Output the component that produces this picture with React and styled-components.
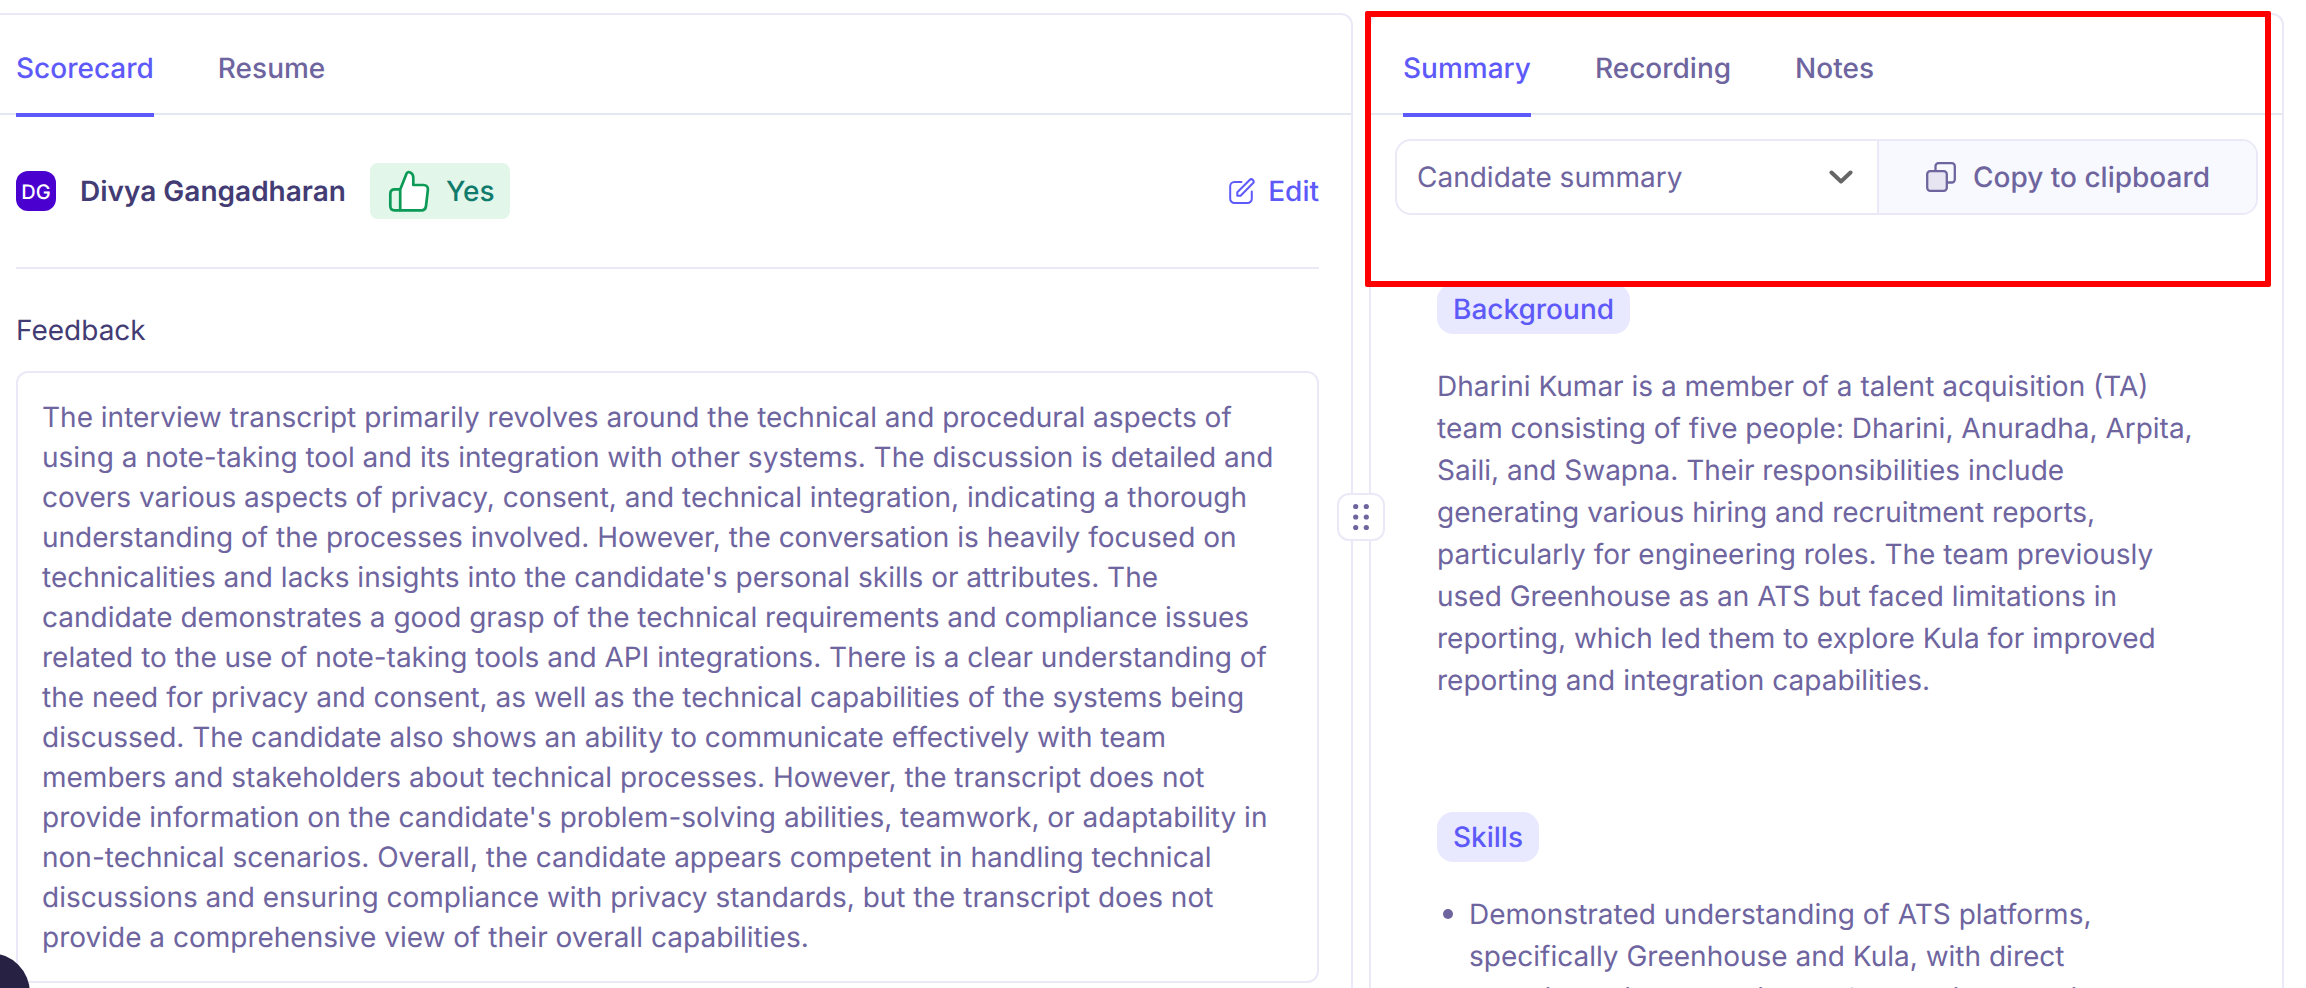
import React from "react";
import styled, { createGlobalStyle } from "styled-components";

const color = {
  primary: "#5e5af9",
  text: "#6e659f",
  heading: "#433c74",
  border: "#ebe9f7",
  rule: "#e2e8f0",
  tag: "#e8e8ff",
};

const GlobalStyle = createGlobalStyle`
  *, *::before, *::after { box-sizing: border-box; }
  body {
    margin: 0;
    background: #fff;
    color: ${color.text};
    font: 400 28px/42px Inter, "Liberation Sans", sans-serif;
    text-rendering: geometricPrecision;
    -webkit-font-smoothing: antialiased;
  }
  button, select { font: inherit; color: inherit; margin: 0; text-rendering: inherit; }
  h2, h3, p, ul { margin: 0; padding: 0; font: inherit; }
`;

const Page = styled.main`
  display: grid;
  grid-template-columns: minmax(0, 1353fr) minmax(0, 915fr);
  column-gap: 16px;
  height: 100vh;
  padding: 13px 22px 0 0;
  overflow: hidden;
`;

const Panel = styled.section`
  position: relative;
  border: 2px solid ${color.border};
  border-bottom: 0;
  border-radius: 0 12px 0 0;
  ${(p) => (p.$cutLeft ? "border-left: 0;" : "border-top-left-radius: 12px;")}
`;

const Tabs = styled.div`
  display: flex;
  gap: 64px;
  height: 100px;
  padding: 0 32px 0 ${(p) => p.$inset}px;
  border-bottom: 2px solid ${color.rule};
`;

const Tab = styled.button`
  height: 102px;
  padding: 8px 0 0;
  border: 0;
  border-bottom: 4px solid ${(p) => (p.$active ? color.primary : "transparent")};
  background: none;
  color: ${(p) => (p.$active ? color.primary : color.text)};
  font-weight: 500;
  cursor: pointer;
`;

const Scorecard = styled.div`
  padding: 0 32px 0 16px;
`;

const Reviewer = styled.header`
  display: flex;
  align-items: center;
  gap: 24px;
  padding: 48px 0;
  border-bottom: 2px solid ${color.border};
`;

const Avatar = styled.span`
  display: grid;
  place-items: center;
  width: 40px;
  height: 40px;
  border-radius: 12px;
  background: #4a00cf;
  color: #fff;
  font-size: 20px;
  font-weight: 500;
`;

const Name = styled.h2`
  color: ${color.heading};
  font-weight: 600;
`;

const Verdict = styled.span`
  display: flex;
  align-items: center;
  gap: 16px;
  height: 56px;
  padding: 0 16px;
  border-radius: 8px;
  background: #e3f6ea;
  color: #0f7b6c;
  font-weight: 500;
`;

const EditButton = styled.button`
  display: flex;
  align-items: center;
  gap: 12px;
  margin-left: auto;
  padding: 0;
  border: 0;
  background: none;
  color: ${color.primary};
  font-weight: 500;
  cursor: pointer;
`;

const FeedbackTitle = styled.h3`
  padding: 40px 0 20px;
  color: ${color.heading};
`;

const FeedbackBox = styled.p`
  padding: 24px;
  border: 2px solid ${color.border};
  border-radius: 12px;
  line-height: 40px;
`;

const Toolbar = styled.div`
  display: flex;
  height: 76px;
  margin: 24px 24px 0;
  border: 2px solid ${color.border};
  border-radius: 16px;
  overflow: hidden;
`;

const SelectWrap = styled.label`
  position: relative;
  flex: 1;
  display: flex;
  min-width: 0;
`;

const Select = styled.select`
  flex: 1;
  min-width: 0;
  padding: 0 64px 0 20px;
  border: 0;
  background: none;
  appearance: none;
  cursor: pointer;
`;

const SelectArrow = styled.svg`
  position: absolute;
  top: 50%;
  right: 24px;
  transform: translateY(-50%);
  pointer-events: none;
`;

const CopyButton = styled.button`
  display: flex;
  align-items: center;
  gap: 16px;
  padding: 0 46px;
  border: 0;
  border-left: 2px solid ${color.border};
  background: #f8f9fe;
  font-weight: 500;
  cursor: pointer;
`;

const SummaryBody = styled.div`
  display: grid;
  gap: 111px;
  padding: 69px 80px 0 66px;
`;

const Topic = styled.article`
  display: grid;
  justify-items: start;
  gap: 31px;
`;

const Tag = styled.h3`
  padding: 4px 16px;
  border-radius: 16px;
  background: ${color.tag};
  color: ${color.primary};
  font-weight: 500;
`;

const Points = styled.ul`
  list-style: none;
`;

const Point = styled.li`
  display: flex;
  gap: 16px;
  padding-left: 6px;

  &::before {
    content: "";
    flex: none;
    width: 10px;
    height: 10px;
    margin-top: 16px;
    border-radius: 50%;
    background: ${color.text};
  }
`;

const Highlight = styled.div`
  position: absolute;
  top: -4px;
  left: -6px;
  right: 11px;
  height: 276px;
  border: 6px solid #ff0000;
  border-radius: 2px;
  pointer-events: none;
`;

const ResizeHandle = styled.button`
  position: absolute;
  top: 478px;
  left: -34px;
  display: grid;
  place-items: center;
  width: 48px;
  height: 48px;
  padding: 0;
  border: 2px solid ${color.border};
  border-radius: 12px;
  background: #fff;
  cursor: col-resize;
`;

const HelpBubble = styled.button`
  position: fixed;
  left: -50px;
  bottom: -45px;
  width: 80px;
  height: 80px;
  border: 0;
  border-radius: 50%;
  background: #272244;
`;

const ThumbIcon = () => (
  <svg width="44" height="44" viewBox="0 0 44 44" fill="none" stroke="#0b9b56" strokeWidth="2.7" strokeLinejoin="round" aria-hidden="true">
    <path fill="#fff" d="M14.2 41.3V20.6L20 6c.6-2.4 2-3.3 3.6-2.8C26 4 27.3 6.5 27.3 9v7h10.2c3.100 0 4.700 2 4.400 4.600L40 37c-.3 2.800-2 4.300-4.500 4.300z" />
    <path d="M14.200 41.300H8.500c-2.500 0-4.200-1.500-4.200-4.300V25c0-3 1.700-4.600 4.500-4.600h5.400" />
  </svg>
);

const EditIcon = () => (
  <svg width="28" height="28" viewBox="0 0 28 28" fill="none" stroke="currentColor" strokeWidth="2" strokeLinecap="round" strokeLinejoin="round" aria-hidden="true">
    <path d="M13.500 5H6.500A4.300 4.300 0 0 0 2.200 9.300v12.400A4.300 4.300 0 0 0 6.500 26h13a4.300 4.300 0 0 0 4.300-4.300V14.500" />
    <path d="M9.300 18.700v-3.400L21.600 3a2.300 2.300 0 0 1 3.300 3.300L12.600 18.700z" />
  </svg>
);

const CopyIcon = () => (
  <svg width="32" height="32" viewBox="0 0 32 32" fill="none" stroke="currentColor" strokeWidth="2.300" strokeLinejoin="round" aria-hidden="true">
    <path d="M10.500 10V5.200a3 3 0 0 1 3-3h13.300a3 3 0 0 1 3 3v13.300a3 3 0 0 1-3 3H22" />
    <rect x="2.200" y="10.200" width="19.600" height="19.600" rx="3" fill="#e6e5f1" />
  </svg>
);

const GripIcon = () => (
  <svg width="16" height="28" viewBox="0 0 16 28" fill={color.text} aria-hidden="true">
    {[3.5, 14, 24.5].map((y) => (
      <React.Fragment key={y}>
        <circle cx="2.700" cy={y} r="2.600" />
        <circle cx="13.300" cy={y} r="2.600" />
      </React.Fragment>
    ))}
  </svg>
);

const feedback =
  "The interview transcript primarily revolves around the technical and procedural aspects of using a note-taking tool and its integration with other systems. The discussion is detailed and covers various aspects of privacy, consent, and technical integration, indicating a thorough understanding of the processes involved. However, the conversation is heavily focused on technicalities and lacks insights into the candidate's personal skills or attributes. The candidate demonstrates a good grasp of the technical requirements and compliance issues related to the use of note-taking tools and API integrations. There is a clear understanding of the need for privacy and consent, as well as the technical capabilities of the systems being discussed. The candidate also shows an ability to communicate effectively with team members and stakeholders about technical processes. However, the transcript does not provide information on the candidate's problem-solving abilities, teamwork, or adaptability in non-technical scenarios. Overall, the candidate appears competent in handling technical discussions and ensuring compliance with privacy standards, but the transcript does not provide a comprehensive view of their overall capabilities.";

const background =
  "Dharini Kumar is a member of a talent acquisition (TA) team consisting of five people: Dharini, Anuradha, Arpita, Saili, and Swapna. Their responsibilities include generating various hiring and recruitment reports, particularly for engineering roles. The team previously used Greenhouse as an ATS but faced limitations in reporting, which led them to explore Kula for improved reporting and integration capabilities.";

const skills = [
  "Demonstrated understanding of ATS platforms, specifically Greenhouse and Kula, with direct experience in generating and managing recruitment reports.",
];

function TabBar({ items, inset }) {
  return (
    <Tabs $inset={inset} role="tablist">
      {items.map((item, i) => (
        <Tab key={item} type="button" role="tab" aria-selected={i === 0} $active={i === 0}>
          {item}
        </Tab>
      ))}
    </Tabs>
  );
}

export default function App() {
  return (
    <>
      <GlobalStyle />
      <Page>
        <Panel $cutLeft>
          <TabBar items={["Scorecard", "Resume"]} inset={16} />
          <Scorecard>
            <Reviewer>
              <Avatar>DG</Avatar>
              <Name>Divya Gangadharan</Name>
              <Verdict>
                <ThumbIcon />
                Yes
              </Verdict>
              <EditButton type="button">
                <EditIcon />
                Edit
              </EditButton>
            </Reviewer>
            <FeedbackTitle>Feedback</FeedbackTitle>
            <FeedbackBox>{feedback}</FeedbackBox>
          </Scorecard>
        </Panel>
        <Panel>
          <TabBar items={["Summary", "Recording", "Notes"]} inset={32} />
          <Toolbar>
            <SelectWrap>
              <Select aria-label="Summary type" defaultValue="candidate">
                <option value="candidate">Candidate summary</option>
              </Select>
              <SelectArrow width="24" height="16" viewBox="0 0 24 16" fill="none" stroke="#666" strokeWidth="4" strokeLinecap="round" strokeLinejoin="round" aria-hidden="true">
                <path d="M2.500 3.500 12 12.500l9.500-9" />
              </SelectArrow>
            </SelectWrap>
            <CopyButton type="button">
              <CopyIcon />
              Copy to clipboard
            </CopyButton>
          </Toolbar>
          <SummaryBody>
            <Topic>
              <Tag>Background</Tag>
              <p>{background}</p>
            </Topic>
            <Topic>
              <Tag>Skills</Tag>
              <Points>
                {skills.map((skill) => (
                  <Point key={skill}>{skill}</Point>
                ))}
              </Points>
            </Topic>
          </SummaryBody>
          <Highlight />
          <ResizeHandle type="button" aria-label="Resize panels">
            <GripIcon />
          </ResizeHandle>
        </Panel>
      </Page>
      <HelpBubble type="button" aria-label="Help" />
    </>
  );
}
